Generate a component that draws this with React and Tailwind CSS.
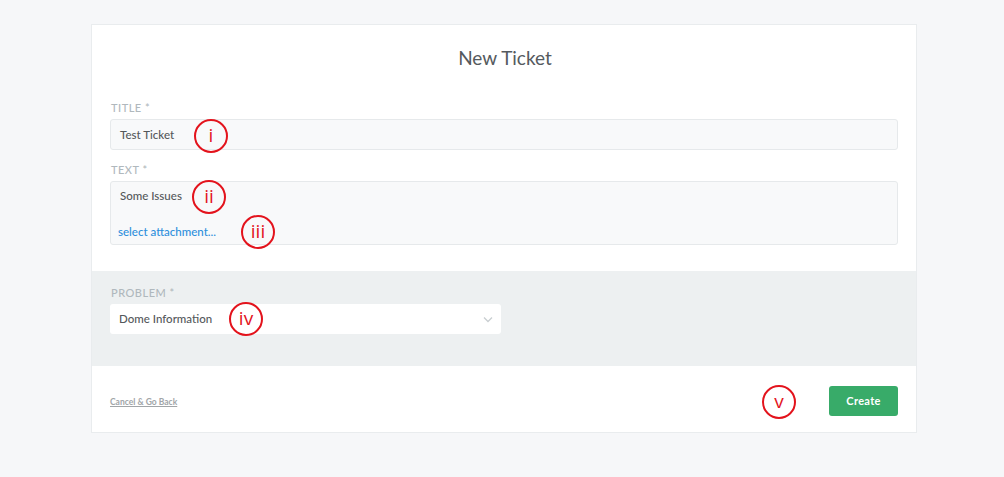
import React from "react";

const font = { fontFamily: "Lato, 'Open Sans', sans-serif" };

function Mark({ label, className }) {
  return (
    <div
      className={`absolute w-[34px] h-[34px] rounded-full border-2 border-[#e3131c] flex items-center justify-center text-[#e3131c] text-[19px] leading-none pointer-events-none ${className}`}
      style={{ fontFamily: "'Open Sans', sans-serif" }}
    >
      <span className="-mt-[2px]">{label}</span>
    </div>
  );
}

export default function App() {
  return (
    <div className="min-h-[477px] w-full bg-[#f6f7f9] pt-[24px]" style={font}>
      <div className="ml-[91px] w-[826px] bg-white border border-[#e9ecee]">
        <div className="px-[18px] pt-[19px] pb-[26px]">
          <h1 className="text-center text-[19px] leading-[28px] text-[#555a5e] mb-[28px] pl-[2px]">New Ticket</h1>
          <div className="text-[11px] leading-[16px] tracking-[0.5px] font-medium text-[#b0b8bd] mb-[3px] pl-[1px]">TITLE *</div>
          <div className="relative h-[31px] bg-[#f8f9fa] border border-[#e6e9eb] rounded-[3px] flex items-center px-[9px] text-[11.5px] font-medium text-[#54585b]">
            Test Ticket
            <Mark label="i" className="left-[83px] top-[-1px]" />
          </div>
          <div className="mt-[12px] text-[11px] leading-[16px] tracking-[0.5px] font-medium text-[#b0b8bd] mb-[3px] pl-[1px]">TEXT *</div>
          <div className="relative h-[64px] bg-[#f8f9fa] border border-[#e6e9eb] rounded-[3px] px-[9px] text-[11.5px] font-medium">
            <div className="pt-[6px] leading-[16px] text-[#54585b]">Some Issues</div>
            <div className="mt-[20px] leading-[16px] text-[#2d8fdc] -ml-[2px]">select attachment...</div>
            <Mark label="ii" className="left-[81px] top-[-2px]" />
            <Mark label="iii" className="left-[130px] top-[33px]" />
          </div>
        </div>
        <div className="bg-[#edf0f1] h-[95px] px-[18px] pt-[14px]">
          <div className="text-[11px] leading-[16px] tracking-[0.5px] font-medium text-[#b0b8bd] mb-[3px] pl-[1px]">PROBLEM *</div>
          <div className="relative w-[391px] h-[30px] bg-white rounded-[3px] flex items-center px-[9px] text-[11.5px] font-medium text-[#54585b]">
            Dome Information
            <svg className="absolute right-[8px] top-[12px]" width="10" height="7" viewBox="0 0 10 7">
              <polyline points="1,1.5 5,5.5 9,1.5" fill="none" stroke="#c9ced1" strokeWidth="1.3" />
            </svg>
            <Mark label="iv" className="left-[119px] top-[-2px]" />
          </div>
        </div>
        <div className="h-[66px] px-[18px] flex items-center justify-between">
          <a className="text-[8.5px] font-bold text-[#a1a5a8] underline mt-[6px]">Cancel &amp; Go Back</a>
          <div className="flex items-center mt-[4px]">
            <div className="relative w-[34px] h-[34px] mr-[33px] mt-[2px]">
              <Mark label="v" className="left-0 top-0" />
            </div>
            <button className="w-[69px] h-[30px] bg-[#38ab69] rounded-[3px] text-white text-[11px] font-bold tracking-[0.3px]">
              Create
            </button>
          </div>
        </div>
      </div>
    </div>
  );
}
